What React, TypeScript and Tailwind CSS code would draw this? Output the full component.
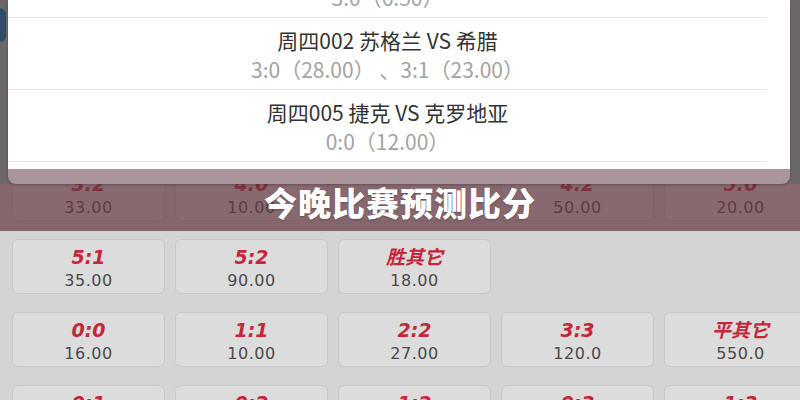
import React from "react";

type Cell = { score: string; odds: string } | null;

const rows: Cell[][] = [
  [
    { score: "", odds: "" },
    { score: "", odds: "" },
    { score: "", odds: "" },
    { score: "", odds: "" },
    { score: "", odds: "" },
  ],
  [
    { score: "", odds: "" },
    { score: "", odds: "" },
    { score: "", odds: "" },
    { score: "", odds: "" },
    { score: "", odds: "" },
  ],
  [
    { score: "3:2", odds: "33.00" },
    { score: "4:0", odds: "10.00" },
    { score: "", odds: "" },
    { score: "4:2", odds: "50.00" },
    { score: "5:0", odds: "20.00" },
  ],
  [
    { score: "5:1", odds: "35.00" },
    { score: "5:2", odds: "90.00" },
    { score: "胜其它", odds: "18.00" },
    null,
    null,
  ],
  [
    { score: "0:0", odds: "16.00" },
    { score: "1:1", odds: "10.00" },
    { score: "2:2", odds: "27.00" },
    { score: "3:3", odds: "120.0" },
    { score: "平其它", odds: "550.0" },
  ],
  [
    { score: "0:1", odds: "12.00" },
    { score: "0:2", odds: "15.00" },
    { score: "1:2", odds: "11.00" },
    { score: "0:3", odds: "30.00" },
    { score: "1:3", odds: "28.00" },
  ],
];

const matches = [
  { title: "周四001 葡萄牙 VS 冰岛", pick: "3:0（6.50）" },
  { title: "周四002 苏格兰 VS 希腊", pick: "3:0（28.00） 、3:1（23.00）" },
  { title: "周四005 捷克 VS 克罗地亚", pick: "0:0（12.00）" },
];

function ScoreCell({ cell }: { cell: Cell }) {
  if (!cell) return <div className="w-[153px] shrink-0" />;
  return (
    <div className="w-[153px] h-[55px] shrink-0 rounded-[6px] border border-[#c8c8c8] bg-[#dcdcdc] flex flex-col items-center pt-[5px]">
      <div
        className="text-[19px] leading-[24px] font-bold italic text-[#c4263a]"
        style={{ fontFamily: '"DejaVu Sans", "Noto Sans CJK SC", sans-serif' }}
      >
        {cell.score}
      </div>
      <div
        className="text-[16px] leading-[24px] text-[#4a4a4a] tracking-[0.5px]"
        style={{ fontFamily: '"DejaVu Sans", sans-serif' }}
      >
        {cell.odds}
      </div>
    </div>
  );
}

export default function App() {
  return (
    <div
      className="relative w-[800px] h-[400px] overflow-hidden bg-[#d4d4d4]"
      style={{ fontFamily: '"Noto Sans CJK SC", sans-serif' }}
    >
      {/* Score grid behind everything */}
      <div className="flex flex-col gap-[18px] pt-[20px] pl-[12px]">
        {rows.map((row, i) => (
          <div key={i} className="flex gap-[10px]">
            {row.map((cell, j) => (
              <ScoreCell key={j} cell={cell} />
            ))}
          </div>
        ))}
      </div>

      {/* Tinted band */}
      <div className="absolute left-0 top-0 w-full h-[231px] bg-[rgba(100,55,66,0.7)]" />
      <div className="absolute left-0 top-0 w-full h-[184px] bg-[#6c6769]">
        <div className="absolute left-0 top-[8px] w-[6px] h-[34px] rounded-r-[6px] bg-[#2f4d6b]" />
      </div>

      {/* Popup list */}
      <div className="absolute left-[8px] top-0 w-[782px] h-[184px] rounded-b-[8px] overflow-hidden bg-[#a9959b] shadow-[0_1px_3px_rgba(0,0,0,0.25)]">
        <div className="h-[169px] bg-white overflow-hidden">
          <div className="w-[759px] mt-[-54px]">
            {matches.map((m) => (
              <div
                key={m.title}
                className="h-[72px] border-b border-[#e6e6e6] flex flex-col items-center pt-[8px]"
              >
                <div className="text-[21px] leading-[29px] text-[#333333]">{m.title}</div>
                <div className="text-[21px] leading-[29px] text-[#a3a3a3]">{m.pick}</div>
              </div>
            ))}
          </div>
        </div>
      </div>

      {/* Heading */}
      <div className="absolute left-0 top-[180px] w-full flex justify-center">
        <div className="text-[33px] leading-[44px] font-black text-white tracking-[1px] [text-shadow:0_1px_2px_rgba(0,0,0,0.25)]">
          今晚比赛预测比分
        </div>
      </div>
    </div>
  );
}
